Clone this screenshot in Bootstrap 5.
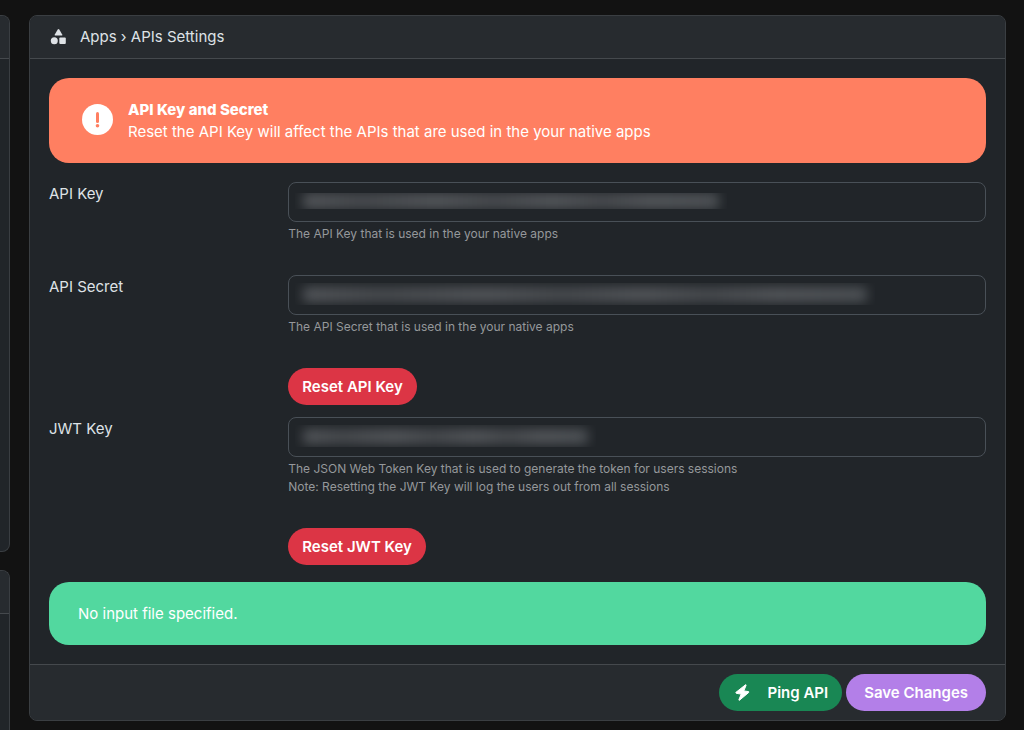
<!DOCTYPE html>
<html lang="en" data-bs-theme="dark">
<head>
<meta charset="utf-8">
<meta name="viewport" content="width=device-width, initial-scale=1">
<title>Apps › APIs Settings</title>
<link href="https://cdn.jsdelivr.net/npm/bootstrap@5.3.0/dist/css/bootstrap.min.css" rel="stylesheet">
<style>
  body { background: #121212; color: #dee2e6; font-family: Inter, "Open Sans", sans-serif; font-size: 15px; line-height: 22px; }
  .page-shell { gap: 19px; padding: 15px 18px 0 0; min-height: 100vh; }
  .side-rail { flex: 0 0 10px; min-width: 0; gap: 18px; }
  .side-rail .card { border-left: 0; border-radius: 0 8px 8px 0; }
  .side-rail .card-header { padding: 0; border-radius: 0 7px 0 0; }
  .side-rail .side-open { border-bottom: 0; border-radius: 0 8px 0 0; }
  .side-tall { height: 537px; }
  .settings-card { min-width: 0; margin-bottom: 9px; }
  .card { --bs-card-bg: #212529; --bs-card-cap-bg: #272b2f; --bs-card-border-color: #3a3e42; --bs-card-border-radius: 8px; --bs-card-inner-border-radius: 7px; }
  .card-header, .card-footer { border-color: #45494d; }
  .card-header { height: 43px; padding: 0 20px; }
  .card-body { padding: 19px; }
  .card-footer { padding: 9px 19px; gap: 4px; }
  .page-title { font-size: 15px; line-height: 22px; font-weight: 400; color: #dee2e6; gap: 13px; }
  .notice { border-radius: 20px; color: #fff; }
  .notice-warning { background: #ff7f61; padding: 20px 32px; gap: 14px; min-height: 85px; margin-bottom: 19px; }
  .notice-warning strong { font-weight: 800; }
  .notice-success { background: #52d89f; padding: 20px 29px; min-height: 63px; margin-top: 17px; }
  .form-row { --bs-gutter-x: 20px; }
  .form-row .col-form-label { padding-top: 1px; padding-bottom: 0; }
  .form-row .form-control { height: 40px; background: transparent; border-color: #495057; border-radius: 8px; color: #dee2e6; }
  .form-row .form-text { font-size: 12px; line-height: 18px; margin-top: 3px; color: #95989b; }
  .row-gap { margin-bottom: 32px; }
  .masked { left: 7px; top: 8px; height: 22px; overflow: hidden; }
  .masked-thin { top: 11px; height: 16px; }
  .masked::after { content: ""; position: absolute; inset: 4px 8px 3px; border-radius: 4px; background: linear-gradient(90deg, #54575b, #484b4f 14%, #54575b 32%, #484b4f 46%, #54575b 60%, #484b4f 72%, #54575b 84%, #4e5256); filter: blur(6px); }
  .masked-thin::after { inset: 0 8px; }
  .mask-key { width: 432px; }
  .mask-secret { width: 580px; }
  .mask-jwt { width: 301px; }
  .pill { border: 0; border-radius: 20px; height: 37px; padding: 0 14px; font-size: 15px; line-height: 22px; font-weight: 600; }
  .btn-ping { background: #198754; color: #fff; gap: 15px; }
  .btn-save { background: #b37fe8; color: #fff; padding: 0 18px; }
  .btn-reset { margin-bottom: 12px; }
</style>
</head>
<body>
<div class="page-shell d-flex">
  <aside class="side-rail d-flex flex-column" aria-label="Sidebar">
    <div class="card side-tall"><div class="card-header"></div></div>
    <div class="card side-open flex-grow-1"><div class="card-header"></div></div>
  </aside>

  <main class="card settings-card flex-grow-1 align-self-start">
    <div class="card-header d-flex align-items-center">
      <h1 class="page-title d-flex align-items-center mb-0">
        <svg width="17" height="18" viewBox="0 0 17 18" fill="#dee2e6" aria-hidden="true"><path d="M7.700 1.500q.8-1.100 1.600 0l2.900 4.900q.5 1.200-.8 1.200H5.600q-1.300 0-.8-1.200z"/><circle cx="4.300" cy="12.700" r="3.500"/><rect x="9.300" y="9.500" width="6.500" height="6.500" rx="1"/></svg>
        Apps › APIs Settings
      </h1>
    </div>

    <form class="card-body" onsubmit="return false">
      <div class="notice notice-warning d-flex align-items-center" role="alert">
        <svg class="flex-shrink-0" width="33" height="33" viewBox="0 0 33 33" aria-hidden="true"><circle cx="16.500" cy="15.500" r="15.500" fill="#fff"/><path d="M16.500 9.500v8" stroke="#ff7f61" stroke-width="3" stroke-linecap="round"/><circle cx="16.500" cy="21.700" r="1.800" fill="#ff7f61"/></svg>
        <div><strong>API Key and Secret</strong><br>Reset the API Key will affect the APIs that are used in the your native apps</div>
      </div>

      <div class="row form-row row-gap">
        <label class="col-3 col-form-label" for="api-key">API Key</label>
        <div class="col-9">
          <div class="position-relative"><input class="form-control" id="api-key" type="text" readonly><span class="masked masked-thin mask-key position-absolute" aria-hidden="true"></span></div>
          <div class="form-text">The API Key that is used in the your native apps</div>
        </div>
      </div>

      <div class="row form-row row-gap">
        <label class="col-3 col-form-label" for="api-secret">API Secret</label>
        <div class="col-9">
          <div class="position-relative"><input class="form-control" id="api-secret" type="text" readonly><span class="masked mask-secret position-absolute" aria-hidden="true"></span></div>
          <div class="form-text">The API Secret that is used in the your native apps</div>
        </div>
      </div>

      <div class="row form-row"><div class="col-9 offset-3">
        <button type="button" class="btn btn-danger pill btn-reset">Reset API Key</button>
      </div></div>

      <div class="row form-row row-gap">
        <label class="col-3 col-form-label" for="jwt-key">JWT Key</label>
        <div class="col-9">
          <div class="position-relative"><input class="form-control" id="jwt-key" type="text" readonly><span class="masked mask-jwt position-absolute" aria-hidden="true"></span></div>
          <div class="form-text">The JSON Web Token Key that is used to generate the token for users sessions<br>Note: Resetting the JWT Key will log the users out from all sessions</div>
        </div>
      </div>

      <div class="row form-row"><div class="col-9 offset-3">
        <button type="button" class="btn btn-danger pill">Reset JWT Key</button>
      </div></div>

      <div class="notice notice-success d-flex align-items-center" role="status">No input file specified.</div>
    </form>

    <div class="card-footer d-flex justify-content-end">
      <button type="button" class="btn pill btn-ping d-inline-flex align-items-center">
        <svg width="19" height="19" viewBox="0 0 19 19" fill="#fff" stroke="#fff" stroke-width="1" stroke-linejoin="round" aria-hidden="true"><path d="M12.500 1.800 3 9.300q-.6.700.2 1l5 .8-2.300 5.600q-.1.800.6.500l9.200-7.700q.6-.7-.2-.9l-4.700-.7 2.300-5.600q.1-.8-.6-.5z"/></svg>
        Ping API
      </button>
      <button type="submit" class="btn pill btn-save">Save Changes</button>
    </div>
  </main>
</div>
<script src="https://cdn.jsdelivr.net/npm/bootstrap@5.3.0/dist/js/bootstrap.bundle.min.js"></script>
</body>
</html>
